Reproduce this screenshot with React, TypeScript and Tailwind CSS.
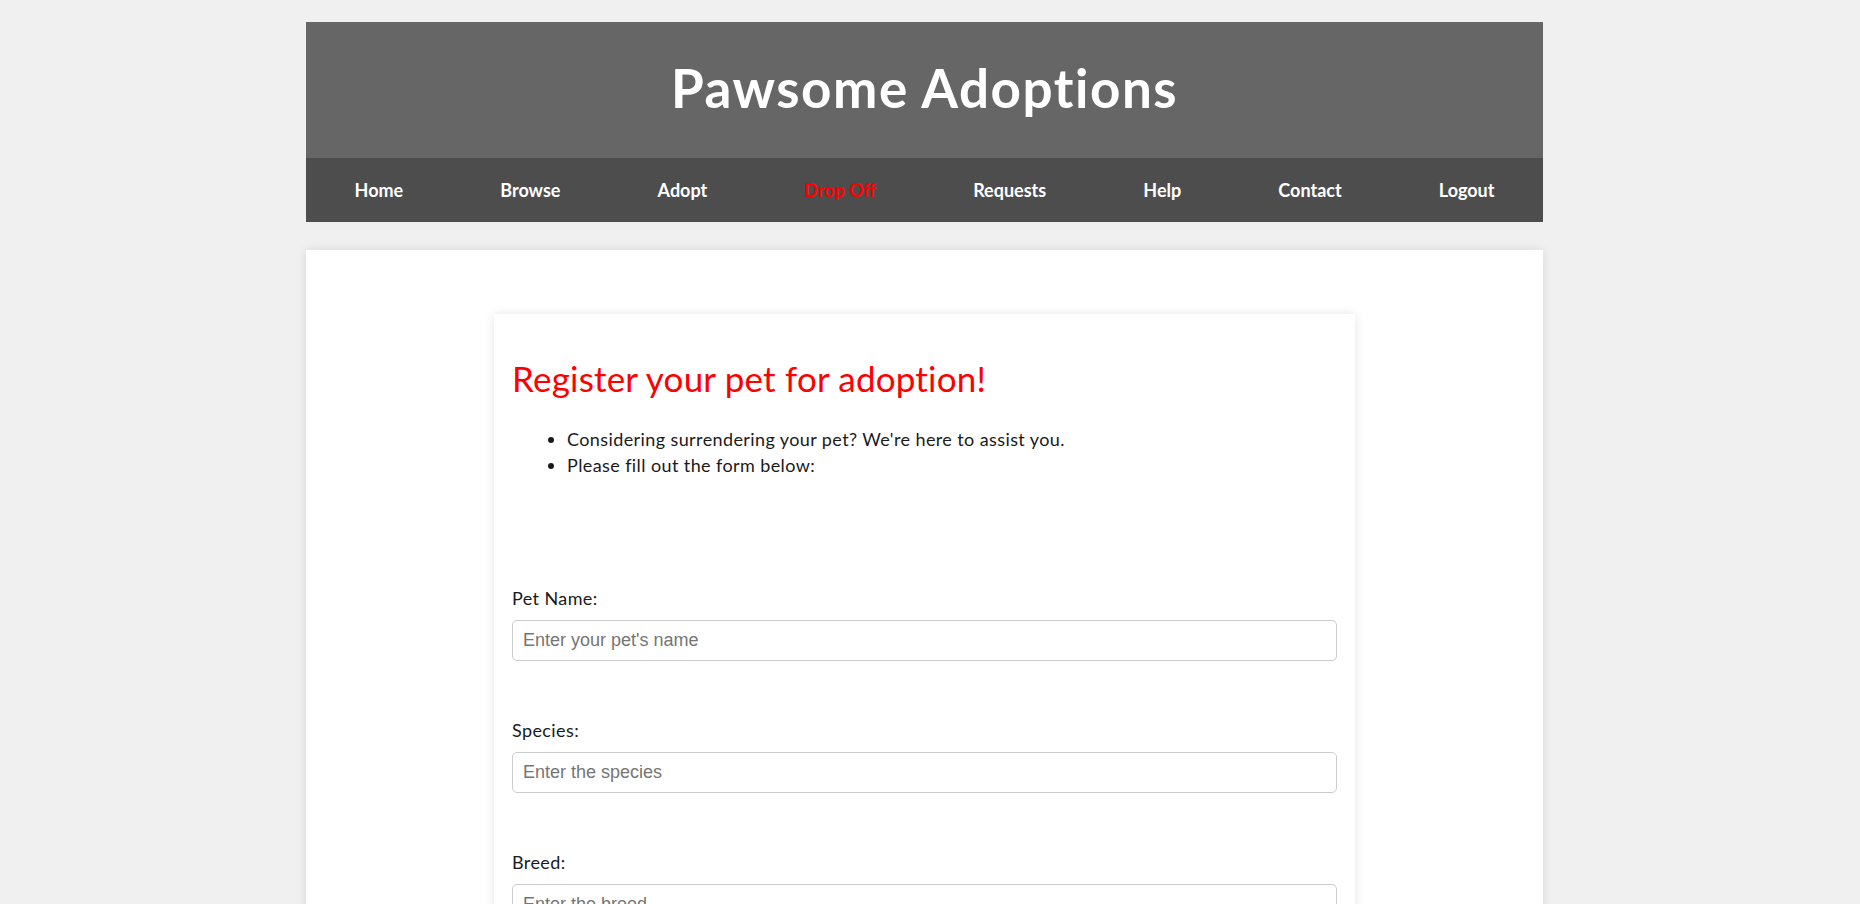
import React from "react";

const navItems = ["Home", "Browse", "Adopt", "Drop Off", "Requests", "Help", "Contact", "Logout"];

const fields = [
  { label: "Pet Name:", placeholder: "Enter your pet's name" },
  { label: "Species:", placeholder: "Enter the species" },
  { label: "Breed:", placeholder: "Enter the breed" },
  { label: "Age:", placeholder: "Enter your pet's age" },
  { label: "Reason for surrender:", placeholder: "Tell us why" },
];

export default function App() {
  return (
    <div className="min-h-screen bg-[#f0f0f0] pt-[22px] font-['Lato',sans-serif]">
      <div className="ml-[306px] w-[1237px]">
        <header className="flex h-[136px] items-center justify-center bg-[#666666] pb-[5px]">
          <h1 className="text-[53px] font-bold leading-none tracking-[1.5px] text-white">Pawsome Adoptions</h1>
        </header>
        <nav className="flex h-[64px] items-center justify-around bg-[#4d4d4d]">
          {navItems.map((item) => (
            <a
              key={item}
              href="#"
              className={`text-[18px] font-bold ${item === "Drop Off" ? "text-[#ff0000]" : "text-white"}`}
            >
              {item}
            </a>
          ))}
        </nav>
        <main className="mt-[28px] bg-white pb-[64px] pt-[64px] shadow-[0_0_10px_rgba(0,0,0,0.1)]">
          <div className="mx-auto w-[861px] bg-white px-[18px] pb-[40px] pt-[44px] shadow-[0_0_10px_rgba(0,0,0,0.1)]">
            <h2 className="text-[35px] leading-[40px] tracking-[0.2px] text-[#ff0000]">Register your pet for adoption!</h2>
            <ul className="mt-[28px] list-disc pl-[55px] text-[18px] leading-[26px] tracking-[0.4px] text-[#1a1a1a]">
              <li>Considering surrendering your pet? We're here to assist you.</li>
              <li>Please fill out the form below:</li>
            </ul>
            <form className="mt-[108px] flex flex-col gap-[57px]">
              {fields.map((f) => (
                <div key={f.label} className="flex flex-col">
                  <label className="text-[18px] leading-[24px] tracking-[0.4px] text-[#1a1a1a]">{f.label}</label>
                  <input
                    type="text"
                    placeholder={f.placeholder}
                    className="mt-[10px] h-[41px] w-full rounded-[5px] border border-[#cccccc] px-[10px] font-['Liberation_Sans',Arial,sans-serif] text-[18px] placeholder:text-[#757575]"
                  />
                </div>
              ))}
            </form>
          </div>
        </main>
      </div>
    </div>
  );
}
